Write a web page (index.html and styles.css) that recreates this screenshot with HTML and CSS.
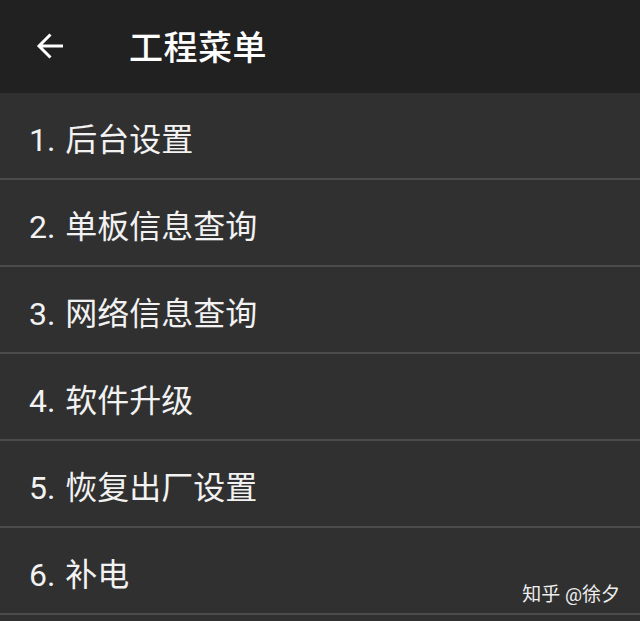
FILE: index.html
```html
<!DOCTYPE html>
<html lang="zh">
<head>
<meta charset="utf-8">
<link rel="stylesheet" href="styles.css">
</head>
<body>
<div class="app">
  <header class="bar">
    <svg class="back" width="28" height="28" viewBox="0 0 28 28"><path d="M27 14H3M14.5 2.5L3 14l11.5 11.5" fill="none" stroke="#ffffff" stroke-width="3"/></svg>
    <h1 class="title">工程菜单</h1>
  </header>
  <ul class="menu">
    <li class="item">1. 后台设置</li>
    <li class="item">2. 单板信息查询</li>
    <li class="item">3. 网络信息查询</li>
    <li class="item">4. 软件升级</li>
    <li class="item">5. 恢复出厂设置</li>
    <li class="item">6. 补电</li>
  </ul>
  <div class="mark">知乎 @徐夕</div>
</div>
</body>
</html>
```
FILE: styles.css
```css
* { box-sizing: border-box; }
html, body { margin: 0; padding: 0; background: #303030; }
body { font-family: Roboto, "Noto Sans CJK SC", sans-serif; color: #f2f2f2; }
.app { position: relative; width: 640px; height: 621px; overflow: hidden; background: #303030; }
.bar { height: 93px; background: #212121; display: flex; align-items: center; padding-left: 36px; padding-bottom: 2px; }
.back { display: block; margin-right: 65px; }
.title { margin: 0; font-family: "Noto Sans CJK SC", sans-serif; font-size: 34px; font-weight: 500; color: #ffffff; letter-spacing: 0.5px; }
.menu { list-style: none; margin: 0; padding: 0; }
.item { height: 87px; border-bottom: 2px solid #4b4b4b; display: flex; align-items: center; padding-left: 29px; padding-top: 2px; font-size: 32px; font-weight: 400; word-spacing: 2px; }
.mark { position: absolute; right: 20px; bottom: 15px; font-size: 19px; color: #eeeeee; }
```
